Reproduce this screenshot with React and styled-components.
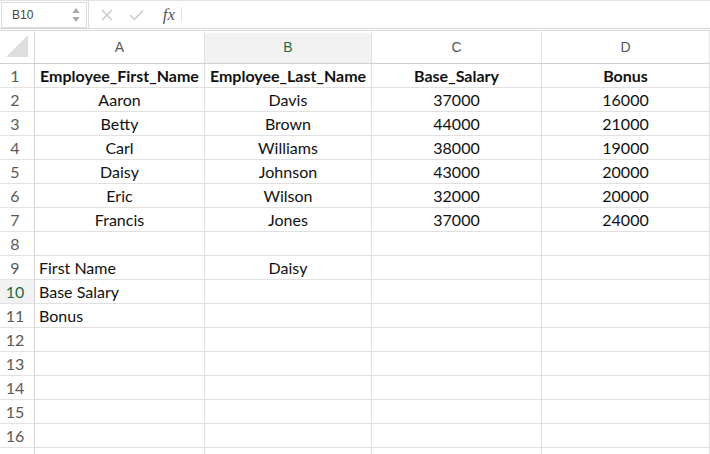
import React from "react";
import styled, { createGlobalStyle } from "styled-components";

const GlobalStyle = createGlobalStyle`
  html, body {
    margin: 0;
    padding: 0;
    background: #ffffff;
  }
  * {
    box-sizing: border-box;
  }
`;

const columns = ["A", "B", "C", "D"];
const selectedCol = "B";
const selectedRow = 10;

const rows = [
  { cells: ["Employee_First_Name", "Employee_Last_Name", "Base_Salary", "Bonus"], bold: true },
  { cells: ["Aaron", "Davis", "37000", "16000"] },
  { cells: ["Betty", "Brown", "44000", "21000"] },
  { cells: ["Carl", "Williams", "38000", "19000"] },
  { cells: ["Daisy", "Johnson", "43000", "20000"] },
  { cells: ["Eric", "Wilson", "32000", "20000"] },
  { cells: ["Francis", "Jones", "37000", "24000"] },
  { cells: ["", "", "", ""] },
  { cells: ["First Name", "Daisy", "", ""], leftFirst: true },
  { cells: ["Base Salary", "", "", ""], leftFirst: true },
  { cells: ["Bonus", "", "", ""], leftFirst: true },
  { cells: ["", "", "", ""] },
  { cells: ["", "", "", ""] },
  { cells: ["", "", "", ""] },
  { cells: ["", "", "", ""] },
  { cells: ["", "", "", ""] },
  // partly visible row at the bottom edge, number scrolled out of view
  { cells: ["", "", "", ""], hideLabel: true },
];

const App = () => (
  <Page>
    <GlobalStyle />
    <FormulaBar>
      <NameBox>
        <span>B10</span>
        <Spinner>
          <svg width="8" height="18" viewBox="0 0 8 18">
            <path d="M4 2 L7.5 7 L0.5 7 Z" fill="#a8a8a8" />
            <path d="M4 16 L7.5 11 L0.5 11 Z" fill="#a8a8a8" />
          </svg>
        </Spinner>
      </NameBox>
      <BarDivider />
      <IconSlot $w={36}>
        <svg width="12" height="12" viewBox="0 0 12 12">
          <path d="M1 1 L11 11 M11 1 L1 11" stroke="#c8c8c8" strokeWidth="1.4" fill="none" />
        </svg>
      </IconSlot>
      <IconSlot $w={22}>
        <svg width="15" height="12" viewBox="0 0 15 12">
          <path d="M1 6 L5.5 10.5 L14 1.5" stroke="#c8c8c8" strokeWidth="1.4" fill="none" />
        </svg>
      </IconSlot>
      <IconSlot $w={30} $end>
        <FxLabel>fx</FxLabel>
      </IconSlot>
      <FxDivider />
    </FormulaBar>
    <Sheet>
      <Corner>
        <CornerTriangle />
      </Corner>
      {columns.map(c => (
        <ColHeader key={c} $active={c === selectedCol}>
          {c}
        </ColHeader>
      ))}
      {rows.map((row, i) => (
        <React.Fragment key={i}>
          <RowHeader $active={i + 1 === selectedRow}>{row.hideLabel ? "" : i + 1}</RowHeader>
          {row.cells.map((v, j) => (
            <Cell key={j} $bold={row.bold} $left={row.leftFirst && j === 0}>
              {v}
            </Cell>
          ))}
        </React.Fragment>
      ))}
    </Sheet>
  </Page>
);

export default App;

const Page = styled.div`
  width: 710px;
  height: 454px;
  overflow: hidden;
  background: #fff;
  font-family: Lato, "Liberation Sans", sans-serif;
`;

const FormulaBar = styled.div`
  display: flex;
  align-items: center;
  height: 29px;
  border-top: 1px solid #e2e2e2;
  border-bottom: 1px solid #d4d4d4;
`;

const NameBox = styled.div`
  display: flex;
  align-items: center;
  justify-content: space-between;
  width: 86px;
  height: 26px;
  margin-left: 1px;
  padding: 0 6px 0 10px;
  border: 1px solid #dcdcdc;
  font-family: "Liberation Sans", sans-serif;
  font-size: 12px;
  color: #444;
`;

const Spinner = styled.div`
  display: flex;
  align-items: center;
`;

const BarDivider = styled.div`
  width: 1px;
  height: 27px;
  margin-left: 1px;
  background: #dcdcdc;
`;

const IconSlot = styled.div`
  display: flex;
  align-items: center;
  justify-content: ${p => (p.$end ? "flex-end" : "center")};
  flex: 0 0 ${p => p.$w}px;
  height: 24px;
`;

const FxLabel = styled.div`
  margin-right: 2px;
  font-family: "Liberation Serif", serif;
  font-style: italic;
  font-size: 17px;
  color: #555;
`;

const FxDivider = styled.div`
  width: 1px;
  height: 15px;
  margin-left: 4px;
  background: #e2e2e2;
`;

const Sheet = styled.div`
  display: grid;
  grid-template-columns: 35px 170px 167px 170px 168px;
  grid-template-rows: 33px;
  grid-auto-rows: 24px;
  margin-top: 1px;
  border-top: 1px solid #d8d8d8;
`;

const Corner = styled.div`
  position: relative;
  border-right: 1px solid #d8d8d8;
  border-bottom: 1px solid #d0d0d0;
`;

const CornerTriangle = styled.div`
  position: absolute;
  left: 6px;
  top: 4px;
  width: 22px;
  height: 22px;
  background: #dedede;
  clip-path: polygon(100% 0, 100% 100%, 0 100%);
`;

const ColHeader = styled.div`
  display: flex;
  align-items: center;
  justify-content: center;
  border-right: 1px solid #e4e4e4;
  border-bottom: 1px solid #d0d0d0;
  background: ${p => (p.$active ? "#f2f2f2" : "#fff")};
  box-shadow: ${p => (p.$active ? "inset 0 2px 0 #fff" : "none")};
  color: ${p => (p.$active ? "#1f6e43" : "#555")};
  font-family: "Liberation Sans", sans-serif;
  font-size: 14px;
`;

const RowHeader = styled.div`
  display: flex;
  align-items: center;
  justify-content: center;
  padding-right: 4px;
  border-right: 1px solid #d4d4d4;
  border-bottom: 1px solid #e2e2e2;
  background: ${p => (p.$active ? "#f2f2f2" : "#fff")};
  color: ${p => (p.$active ? "#1f6e43" : "#5a5a5a")};
  font-size: 16px;
`;

const Cell = styled.div`
  display: flex;
  align-items: center;
  justify-content: ${p => (p.$left ? "flex-start" : "center")};
  padding: 0 4px;
  border-right: 1px solid #e0e0e0;
  border-bottom: 1px solid #e0e0e0;
  color: #111;
  font-size: 16px;
  font-weight: ${p => (p.$bold ? 700 : 400)};
  white-space: nowrap;
  overflow: hidden;
`;
